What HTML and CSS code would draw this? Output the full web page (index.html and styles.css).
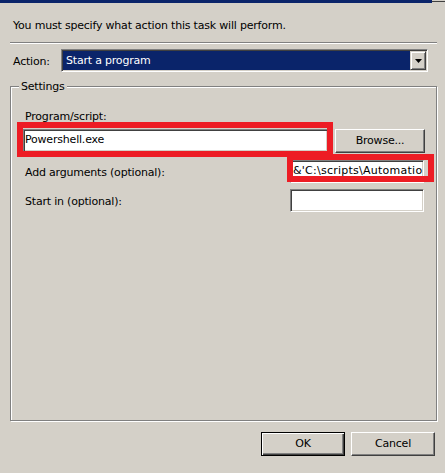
FILE: index.html
```html
<!DOCTYPE html>
<html>
<head>
<meta charset="utf-8">
<link rel="stylesheet" href="styles.css">
</head>
<body>
<div class="titlebar"><div class="tb-main"></div><div class="tb-end"></div></div>
<div class="intro">You must specify what action this task will perform.</div>
<div class="sep"></div>
<div class="action-row">
  <span class="action-label">Action:</span>
  <div class="combo">
    <div class="combo-value">Start a program</div>
    <div class="combo-btn"><svg width="7" height="4" viewBox="0 0 7 4"><path d="M0 0h7L3.5 4z" fill="#000"/></svg></div>
  </div>
</div>
<fieldset class="settings">
  <legend>Settings</legend>
  <div class="lbl">Program/script:</div>
  <div class="row row-program">
    <div class="tb-wrap mark-program"><div class="tb tb-program">Powershell.exe</div></div>
    <div class="btn browse">Browse...</div>
  </div>
  <div class="row row-args">
    <span class="row-label">Add arguments (optional):</span>
    <div class="tb-wrap tb-side mark-args"><div class="tb tb-args">&amp;'C:\scripts\Automation\</div></div>
  </div>
  <div class="row row-start">
    <span class="row-label">Start in (optional):</span>
    <div class="tb-wrap tb-side"><div class="tb"></div></div>
  </div>
</fieldset>
<div class="buttons">
  <div class="btn btn-default">OK</div>
  <div class="btn">Cancel</div>
</div>
</body>
</html>
```
FILE: styles.css
```css
html, body {
  margin: 0;
  padding: 0;
}
body {
  width: 445px;
  height: 473px;
  overflow: hidden;
  background: #d4d0c8;
  font-family: "DejaVu Sans", Verdana, sans-serif;
  font-size: 11px;
  line-height: 13px;
  letter-spacing: -0.2px;
  color: #000;
}
.titlebar {
  display: flex;
  height: 3px;
}
.tb-main {
  flex: 1;
  background: #0a246a;
}
.tb-end {
  width: 13px;
  height: 1px;
  margin-top: 1px;
  background: #404040;
}
.intro {
  padding: 16px 13px 0;
}
.sep {
  margin: 10px 8px 0 10px;
  border-top: 1px solid #808080;
  border-bottom: 1px solid #fff;
}
.action-row {
  display: flex;
  align-items: flex-start;
  margin-top: 5px;
  padding-left: 13px;
}
.action-label {
  width: 48px;
  padding-top: 6px;
}
.combo {
  display: flex;
  width: 367px;
  height: 23px;
  box-sizing: border-box;
  border: 1px solid;
  border-color: #808080 #fff #fff #808080;
  box-shadow: inset 1px 1px 0 #404040, inset -1px -1px 0 #d4d0c8;
  padding: 1px;
}
.combo-value {
  flex: 1;
  background: #0a246a;
  color: #fff;
  padding-left: 3px;
  line-height: 19px;
}
.combo-btn {
  width: 16px;
  box-sizing: border-box;
  border: 1px solid;
  border-color: #d4d0c8 #404040 #404040 #d4d0c8;
  box-shadow: inset 1px 1px 0 #fff, inset -1px -1px 0 #808080;
  display: flex;
  align-items: center;
  justify-content: center;
  background: #d4d0c8;
}
.combo-btn svg {
  display: block;
  margin-left: 1px;
}
.settings {
  margin: 8px 0 0 10px;
  width: 427px;
  height: 341px;
  box-sizing: border-box;
  min-width: 0;
  padding: 0 11px 0 14px;
  border: 1px solid #808080;
  box-shadow: inset 1px 1px 0 #fff, 1px 1px 0 #fff;
}
.settings legend {
  margin-left: -6px;
  padding: 0 2px;
  line-height: 13px;
  background: #d4d0c8;
}
.lbl {
  margin-top: 17px;
}
.row {
  display: flex;
  align-items: flex-start;
}
.row-program {
  margin-top: 6px;
}
.row-args {
  margin-top: 7px;
}
.row-start {
  margin-top: 6px;
}
.row-label {
  flex: 1;
  padding-top: 6px;
}
.tb-wrap {
  position: relative;
}
.tb {
  height: 23px;
  box-sizing: border-box;
  border: 1px solid;
  border-color: #808080 #fff #fff #808080;
  box-shadow: inset 1px 1px 0 #404040, inset -1px -1px 0 #d4d0c8;
  background: #fff;
  padding: 0 2px;
  line-height: 20px;
  white-space: nowrap;
  overflow: hidden;
}
.tb-program {
  padding-left: 1px;
}
.tb-args {
  letter-spacing: 0.25px;
}
.mark-program {
  margin-left: -2px;
  width: 305px;
}
.tb-side {
  width: 134px;
  margin-right: 1px;
}
.mark-program::after,
.mark-args::after {
  content: "";
  position: absolute;
  box-sizing: border-box;
  border: 6px solid #ed1c24;
  pointer-events: none;
}
.mark-program::after {
  left: -6px;
  top: -7px;
  width: 316px;
  height: 35px;
}
.mark-args::after {
  left: -3px;
  top: -6px;
  width: 147px;
  height: 28px;
}
.btn {
  width: 84px;
  height: 24px;
  box-sizing: border-box;
  border: 1px solid;
  border-color: #fff #404040 #404040 #fff;
  box-shadow: inset -1px -1px 0 #808080;
  text-align: center;
  line-height: 22px;
}
.browse {
  width: 90px;
  margin-left: 7px;
}
.btn-default {
  border-color: #000;
  box-shadow: inset 1px 1px 0 #fff, inset -1px -1px 0 #404040, inset -2px -2px 0 #808080;
}
.buttons {
  display: flex;
  justify-content: flex-end;
  gap: 6px;
  margin-top: 11px;
  padding-right: 10px;
}
```
